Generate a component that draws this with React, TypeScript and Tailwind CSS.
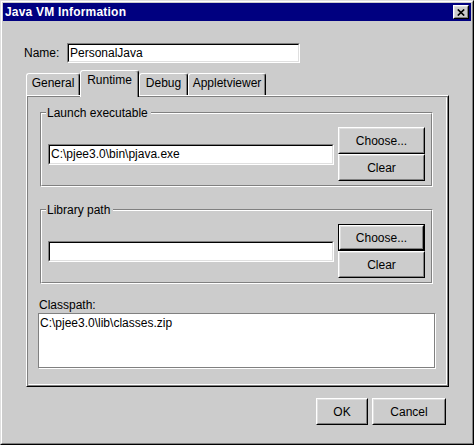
import type { ReactNode } from "react"

const font = "font-['Liberation_Sans',Arial,Helvetica,sans-serif]"

function Bevel({ children, className = "" }: { children: ReactNode; className?: string }) {
  // classic two-line raised edge
  return (
    <div className={`flex border border-t-white border-l-white border-r-black border-b-black ${className}`}>
      <div className="flex flex-1 items-center justify-center border border-t-[#dfdfdf] border-l-[#dfdfdf] border-r-[#808080] border-b-[#808080]">
        {children}
      </div>
    </div>
  )
}

function Button({ label, w, isDefault = false }: { label: string; w: string; isDefault?: boolean }) {
  const text = <span className="text-[12px] leading-[14px] text-black">{label}</span>
  if (isDefault) {
    return (
      <div className={`flex h-[27px] ${w} border border-black`}>
        <Bevel className="flex-1">{text}</Bevel>
      </div>
    )
  }
  return <Bevel className={`h-[27px] ${w}`}>{text}</Bevel>
}

function Field({ value, className = "" }: { value?: string; className?: string }) {
  return (
    <div className={`flex border border-t-[#808080] border-l-[#808080] border-r-white border-b-white ${className}`}>
      <div className="flex flex-1 items-center border border-t-black border-l-black border-r-[#dfdfdf] border-b-[#dfdfdf] bg-white pl-px text-[12px] leading-[14px] text-black">
        {value}
      </div>
    </div>
  )
}

function GroupBox({ title, value, defaultChoose = false }: { title: string; value?: string; defaultChoose?: boolean }) {
  return (
    <div className="relative ml-[11px] h-[75px] w-[393px] border border-t-[#808080] border-l-[#808080] border-r-white border-b-white">
      <div className="h-full border border-t-white border-l-white border-r-[#808080] border-b-[#808080]">
        <div className="flex items-center gap-[4px] pl-[6px] pt-[13px]">
          <Field value={value} className="h-[21px] w-[286px]" />
          <div className="flex flex-col">
            <Button label="Choose..." w="w-[87px]" isDefault={defaultChoose} />
            <Button label="Clear" w="w-[87px]" />
          </div>
        </div>
      </div>
      <span className="absolute left-[5px] top-[-7px] bg-[#cccccc] pl-px pr-[3px] text-[12px] leading-[14px] text-black">
        {title}
      </span>
    </div>
  )
}

function Tab({ label, w, active = false }: { label: string; w: string; active?: boolean }) {
  const size = active ? "relative z-10 -mb-[2px] h-[27px]" : "h-[22px]"
  return (
    <div
      className={`flex justify-center ${w} ${size} rounded-t-[3px] border-l border-t border-r border-l-white border-t-white border-r-black bg-[#cccccc] pt-[2px] shadow-[inset_-1px_0_0_#808080] text-[12px] leading-[14px] text-black`}
    >
      {label}
    </div>
  )
}

export default function App() {
  return (
    <div className={`h-[445px] w-[474px] bg-[#cccccc] ${font}`}>
      <div className="h-full border border-t-[#dfdfdf] border-l-[#dfdfdf] border-r-black border-b-black">
        <div className="flex h-full flex-col border border-t-white border-l-white border-r-[#808080] border-b-[#808080] p-px">
          {/* title bar */}
          <div className="flex h-[18px] items-center justify-between bg-[#000080] pl-[2px] pr-[2px]">
            <span className="text-[12px] font-bold leading-[14px] tracking-[0.2px] text-white">Java VM Information</span>
            <Bevel className="h-[14px] w-[16px] bg-[#cccccc]">
              <svg className="block h-[7px] w-[8px] shrink-0" viewBox="0 0 8 7">
                <path d="M0.8 0.5L7.2 6.5M7.2 0.5L0.8 6.5" stroke="#000000" strokeWidth="1.7" fill="none" />
              </svg>
            </Bevel>
          </div>

          {/* name */}
          <div className="mt-[22px] flex h-[20px] items-center pl-[21px]">
            <span className="w-[43px] text-[12px] leading-[14px] text-black">Name:</span>
            <Field value="PersonalJava" className="h-[20px] w-[233px]" />
          </div>

          {/* tabs */}
          <div className="ml-[23px] mt-[7px] flex h-[25px] items-end">
            <Tab label="General" w="w-[54px]" />
            <Tab label="Runtime" w="w-[59px]" active />
            <Tab label="Debug" w="w-[49px]" />
            <Tab label="Appletviewer" w="w-[78px]" />
          </div>

          {/* tab page */}
          <div className="ml-[23px] h-[292px] w-[423px] border border-t-white border-l-white border-r-black border-b-black">
            <div className="h-full border border-[#808080]">
              <div className="h-full border border-t-[#cccccc] border-l-[#cccccc] border-r-white border-b-white">
                <div className="pt-[14px]">
                  <GroupBox title="Launch executable" value="C:\pjee3.0\bin\pjava.exe" />
                </div>
                <div className="pt-[22px]">
                  <GroupBox title="Library path" defaultChoose />
                </div>
                <div className="ml-[10px] mt-[14px] text-[12px] leading-[14px] text-black">Classpath:</div>
                <div className="ml-[9px] mt-px h-[55px] w-[397px] border border-[#808080] bg-white pl-[1px] pt-[2px] text-[12px] leading-[14px] text-black shadow-[1px_1px_0_#ffffff]">
                  C:\pjee3.0\lib\classes.zip
                </div>
              </div>
            </div>
          </div>

          {/* dialog buttons */}
          <div className="mt-[11px] flex justify-end gap-[4px] pr-[25px]">
            <Button label="OK" w="w-[52px]" />
            <Button label="Cancel" w="w-[74px]" />
          </div>
        </div>
      </div>
    </div>
  )
}
